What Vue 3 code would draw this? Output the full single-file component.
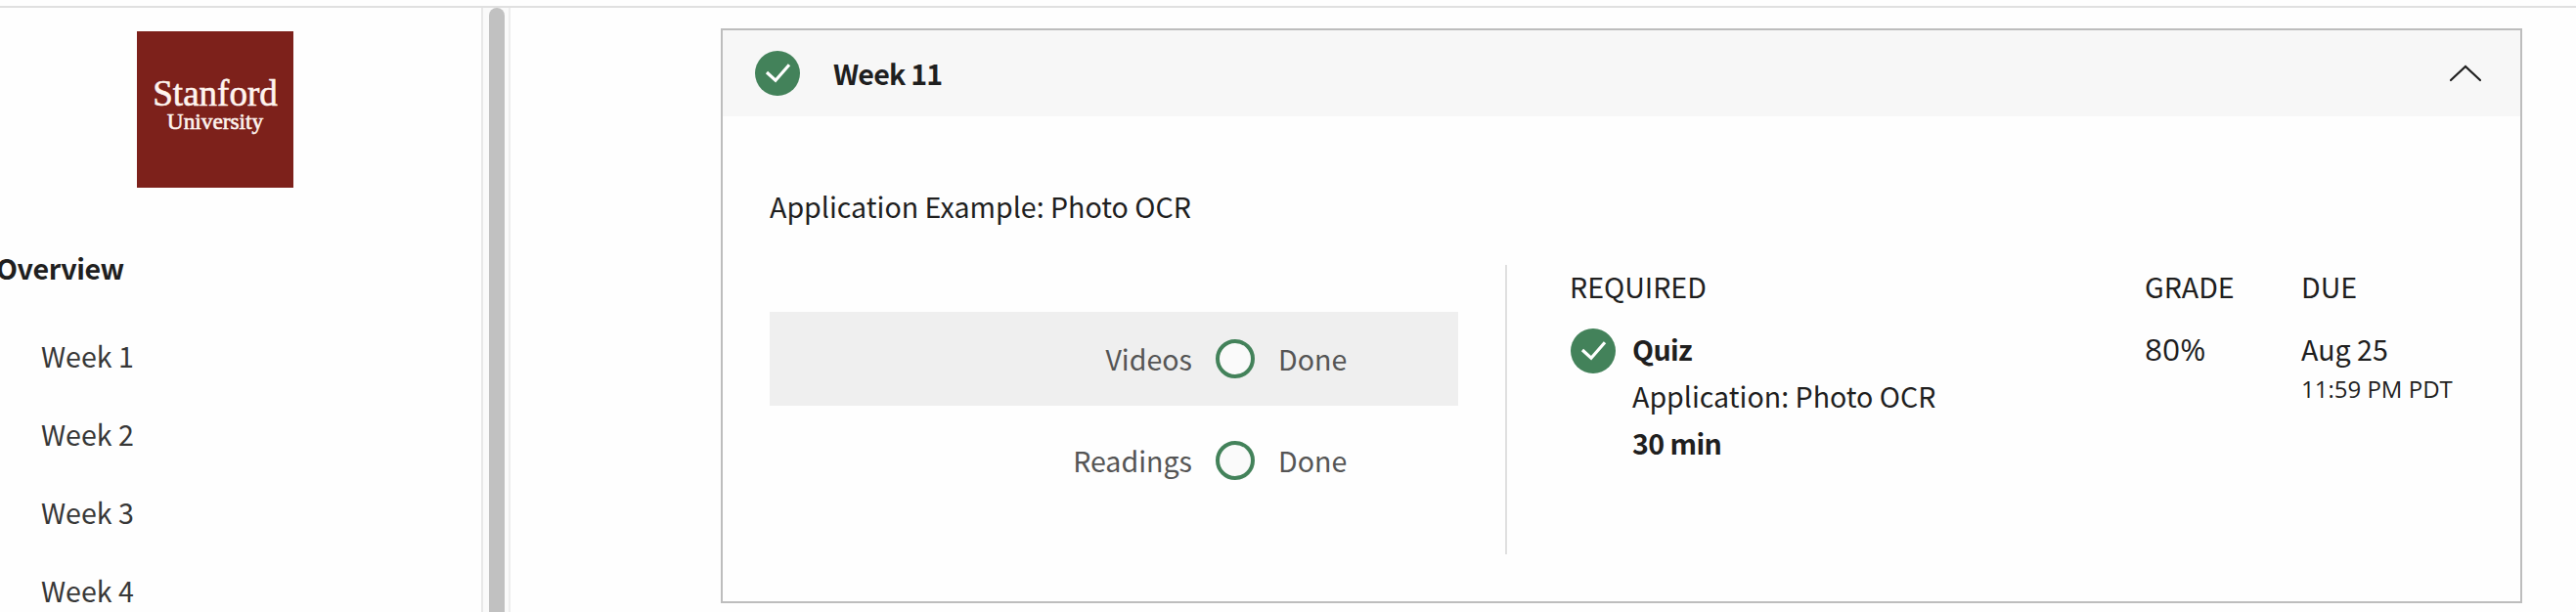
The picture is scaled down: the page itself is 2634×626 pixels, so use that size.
<script setup>
const weeks = ['Week 1', 'Week 2', 'Week 3', 'Week 4']
const progress = [
  { label: 'Videos', status: 'Done', shaded: true },
  { label: 'Readings', status: 'Done', shaded: false },
]
</script>

<template>
  <div class="page">
    <aside class="sidebar">
      <div class="logo">
        <span class="logo-main">Stanford</span>
        <span class="logo-sub">University</span>
      </div>
      <div class="overview">Overview</div>
      <nav class="weeks">
        <a v-for="week in weeks" :key="week" class="week">{{ week }}</a>
      </nav>
    </aside>
    <div class="scrollbar"><div class="thumb"></div></div>
    <main class="main">
      <section class="card">
        <header class="card-header">
          <svg class="check" viewBox="0 0 46 46">
            <circle cx="23" cy="23" r="23" />
            <path d="M12 22L21 30.3L35 14.3" />
          </svg>
          <h2 class="card-title">Week 11</h2>
          <svg class="chevron" viewBox="0 0 34 20">
            <path d="M2 17L17 3L32 17" />
          </svg>
        </header>
        <p class="summary">Application Example: Photo OCR</p>
        <div class="columns">
          <div class="progress">
            <div v-for="row in progress" :key="row.label" class="row" :class="{ shaded: row.shaded }">
              <span class="row-label">{{ row.label }}</span>
              <span class="ring"></span>
              <span class="row-status">{{ row.status }}</span>
            </div>
          </div>
          <div class="required">
            <div class="col-item">
              <div class="head head-required">REQUIRED</div>
              <div class="assignment">
                <svg class="check" viewBox="0 0 46 46">
                  <circle cx="23" cy="23" r="23" />
                  <path d="M12 22L21 30.3L35 14.3" />
                </svg>
                <div class="details">
                  <div class="strong">Quiz</div>
                  <div>Application: Photo OCR</div>
                  <div class="strong">30 min</div>
                </div>
              </div>
            </div>
            <div class="col-grade">
              <div class="head">GRADE</div>
              <div class="grade">80%</div>
            </div>
            <div class="col-due">
              <div class="head">DUE</div>
              <div>Aug 25</div>
              <div class="time">11:59 PM PDT</div>
            </div>
          </div>
        </div>
      </section>
    </main>
  </div>
</template>

<style>
body {
  margin: 0;
  background: #fefefe;
}
</style>

<style scoped>
.page {
  box-sizing: border-box;
  width: 2634px;
  height: 626px;
  border-top: 6px solid #fefefe;
  display: flex;
  overflow: hidden;
  background: linear-gradient(#e0e0e0 0 2px, #fefefe 2px);
  background-clip: padding-box;
  background-origin: padding-box;
  color: #1f1f1f;
  font-family: "Noto Sans CJK SC", "Open Sans", sans-serif;
  font-size: 28.6px;
  line-height: 48px;
  white-space: nowrap;
}
.sidebar {
  width: 492px;
  flex: none;
}
.logo {
  width: 160px;
  height: 160px;
  margin: 26px 0 0 140px;
  background: #7d211b;
  color: #fff4ef;
  font-family: "Liberation Serif", serif;
  display: flex;
  flex-direction: column;
  align-items: center;
  -webkit-text-stroke: 0.6px #fff4ef;
}
.logo-main {
  margin-top: 44px;
  font-size: 37px;
  line-height: 40px;
}
.logo-sub {
  margin-top: -4px;
  font-size: 23.3px;
  line-height: 24px;
}
.overview {
  margin: 58px 0 0 -4px;
  font-weight: 700;
  letter-spacing: -0.4px;
}
.weeks {
  margin-top: 26px;
  padding-left: 42px;
  display: flex;
  flex-direction: column;
  color: #373737;
}
.week {
  height: 80px;
  line-height: 80px;
}
.scrollbar {
  box-sizing: border-box;
  width: 30px;
  flex: none;
  margin-top: 2px;
  padding: 0 4px 0 6px;
  border-left: 2px solid #e8e8e8;
  border-right: 2px solid #ededed;
  background: #fafafa;
}
.thumb {
  width: 16px;
  height: 640px;
  border-radius: 8px;
  background: #c1c1c1;
}
.main {
  padding: 23px 0 0 215px;
}
.card {
  box-sizing: border-box;
  width: 1842px;
  height: 588px;
  border: 2px solid #bdbdbd;
}
.card-header {
  height: 88px;
  display: flex;
  align-items: center;
  padding: 0 38px 0 33px;
  background: #f7f7f7;
}
.check {
  width: 46px;
  height: 46px;
  flex: none;
  display: block;
}
.check circle {
  fill: #43825a;
}
.check path {
  fill: none;
  stroke: #fff;
  stroke-width: 3.2;
}
.card-title {
  margin: 0 auto 0 34px;
  font-size: 28.6px;
  font-weight: 700;
  letter-spacing: -0.8px;
}
.chevron {
  width: 34px;
  height: 20px;
  margin-right: 1px;
}
.chevron path {
  fill: none;
  stroke: #1f1f1f;
  stroke-width: 2.2;
  stroke-linecap: round;
}
.summary {
  margin: 68px 0 0 48px;
}
.columns {
  display: flex;
  margin: 36px 0 0 48px;
  height: 296px;
}
.progress {
  width: 704px;
  margin-right: 48px;
  padding-top: 48px;
  display: flex;
  flex-direction: column;
  gap: 8px;
  color: #555;
}
.row {
  height: 96px;
  display: grid;
  grid-template-columns: 432px 40px 1fr;
  column-gap: 24px;
  align-items: center;
}
.shaded {
  background: #efefef;
}
.row-label {
  text-align: right;
}
.ring {
  box-sizing: border-box;
  width: 40px;
  height: 40px;
  border: 4px solid #43825a;
  border-radius: 50%;
  background: #fafafa;
}
.required {
  flex: none;
  display: grid;
  grid-template-columns: 587px 160px 180px;
  padding-left: 65px;
  border-left: 2px solid #e0e0e0;
}
.head {
  margin: -2px 0 16px;
}
.head-required {
  margin-left: -1px;
}
.assignment {
  display: flex;
  align-items: flex-start;
  gap: 17px;
}
.assignment .check {
  margin-top: 3px;
}
.strong {
  font-weight: 700;
  letter-spacing: -0.6px;
}
.grade {
  font-family: "Open Sans", sans-serif;
  font-size: 31.6px;
}
.time {
  font-family: "Open Sans", sans-serif;
  font-size: 24px;
  line-height: 33px;
}
</style>
